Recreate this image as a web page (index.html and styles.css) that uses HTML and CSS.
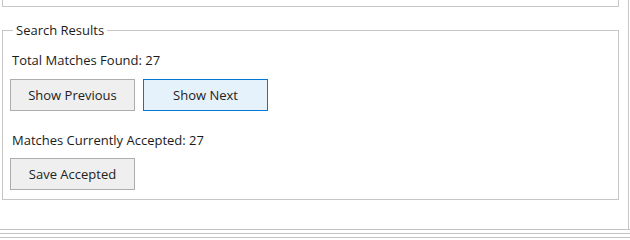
FILE: index.html
```html
<!DOCTYPE html>
<html lang="en">
<head>
<meta charset="utf-8">
<title>Search Results</title>
<link rel="stylesheet" href="styles.css">
</head>
<body>
<div class="window">
  <div class="top-pane"></div>
  <fieldset class="group">
    <legend class="group-title">Search Results</legend>
    <p class="label">Total Matches Found: 27</p>
    <div class="button-row">
      <button class="btn" type="button">Show Previous</button>
      <button class="btn btn-hover" type="button">Show Next</button>
    </div>
    <p class="label label-gap">Matches Currently Accepted: 27</p>
    <div class="button-row button-row-tight">
      <button class="btn" type="button">Save Accepted</button>
    </div>
  </fieldset>
</div>
<div class="statusbar"></div>
</body>
</html>
```
FILE: styles.css
```css
html, body {
  margin: 0;
  background: #fff;
}
body {
  width: 630px;
  height: 240px;
  overflow: hidden;
  font-family: "Open Sans", "Noto Sans", sans-serif;
  font-size: 13px;
  color: #1b1b1b;
}
.window {
  box-sizing: border-box;
  width: 629px;
  height: 229px;
  border-right: 1px solid #c6c6c6;
  padding-left: 2px;
}
.top-pane {
  box-sizing: border-box;
  width: 617px;
  height: 7px;
  border: 1px solid #c6c6c6;
  border-top: none;
}
.group {
  box-sizing: border-box;
  width: 617px;
  margin: 15px 0 0;
  padding: 14px 7px 9px;
  border: 1px solid #c6c6c6;
  min-inline-size: 0;
}
.group-title {
  margin-left: 3px;
  padding: 0 3px;
  line-height: 16px;
}
.label {
  margin: 0 0 0 2px;
  line-height: 16px;
}
.label-gap {
  margin-top: 21px;
}
.button-row {
  display: flex;
  gap: 8px;
  margin-top: 11px;
}
.button-row-tight {
  margin-top: 10px;
}
.btn {
  box-sizing: border-box;
  width: 125px;
  height: 32px;
  padding: 0;
  border: 1px solid #adadad;
  background: #efefef;
  font: inherit;
  color: #222;
}
.btn-hover {
  border-color: #0078d7;
  background: #e5f1fb;
}
.statusbar {
  height: 11px;
  background: repeating-linear-gradient(to bottom, #c2c2c2 0 1px, #fff 1px 4px);
}
```
